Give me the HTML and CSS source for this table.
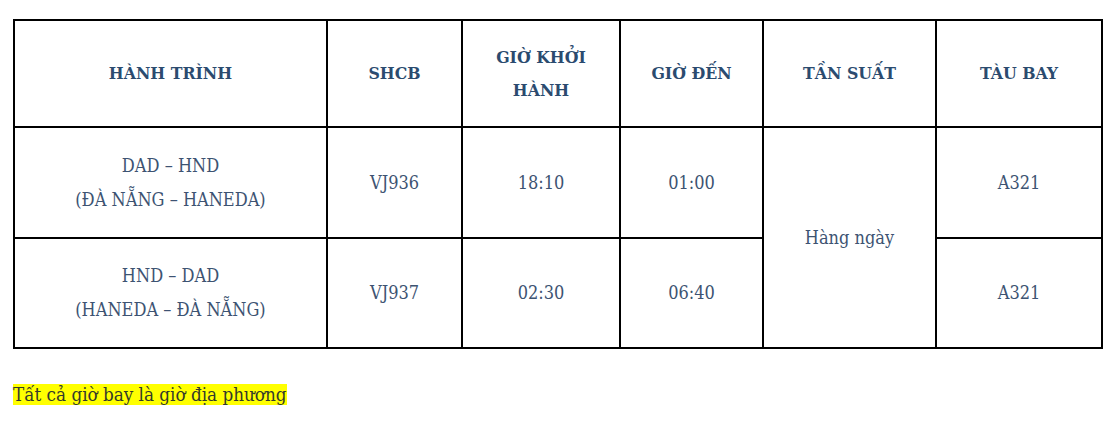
FILE: index.html
```html
<!DOCTYPE html>
<html lang="vi">
<head>
<meta charset="utf-8">
<link rel="stylesheet" href="styles.css">
</head>
<body>
<div class="page">
  <table class="flights">
    <colgroup>
      <col class="c1"><col class="c2"><col class="c3"><col class="c4"><col class="c5"><col class="c6">
    </colgroup>
    <thead>
      <tr class="head">
        <th>HÀNH TRÌNH</th>
        <th>SHCB</th>
        <th>GIỜ KHỞI<br>HÀNH</th>
        <th>GIỜ ĐẾN</th>
        <th>TẦN SUẤT</th>
        <th>TÀU BAY</th>
      </tr>
    </thead>
    <tbody>
      <tr class="row1">
        <td>DAD – HND<br>(ĐÀ NẴNG – HANEDA)</td>
        <td>VJ936</td>
        <td>18:10</td>
        <td>01:00</td>
        <td rowspan="2">Hàng ngày</td>
        <td>A321</td>
      </tr>
      <tr class="row2">
        <td>HND – DAD<br>(HANEDA – ĐÀ NẴNG)</td>
        <td>VJ937</td>
        <td>02:30</td>
        <td>06:40</td>
        <td>A321</td>
      </tr>
    </tbody>
  </table>
  <p class="note"><span class="hl">Tất cả giờ bay là giờ địa phương</span></p>
</div>
</body>
</html>
```
FILE: styles.css
```css
html, body {
  margin: 0;
  padding: 0;
  background: #fff;
}
.page {
  padding: 19px 11px 0 13px;
  font-family: "DejaVu Serif Condensed", "DejaVu Serif", "Liberation Serif", serif;
}
.flights {
  border-collapse: collapse;
  width: 1088px;
  table-layout: fixed;
  border: 2px solid #000;
}
.c1 { width: 313px; }
.c2 { width: 135px; }
.c3 { width: 158px; }
.c4 { width: 143px; }
.c5 { width: 173px; }
.c6 { width: 166px; }
.flights th,
.flights td {
  border: 2px solid #000;
  text-align: center;
  vertical-align: middle;
  padding: 0 8px;
}
.flights th {
  color: #2b4b6f;
  font-weight: bold;
  font-size: 17.5px;
  line-height: 33px;
}
.flights td {
  color: #3d5372;
  font-size: 18px;
  line-height: 34px;
}
.head { height: 107px; }
.row1 { height: 111px; }
.row2 { height: 110px; }
.note {
  margin: 34px 0 0 0;
  font-size: 18.7px;
  line-height: 24px;
  color: #333a2c;
}
.hl {
  background: #ffff00;
}
```
